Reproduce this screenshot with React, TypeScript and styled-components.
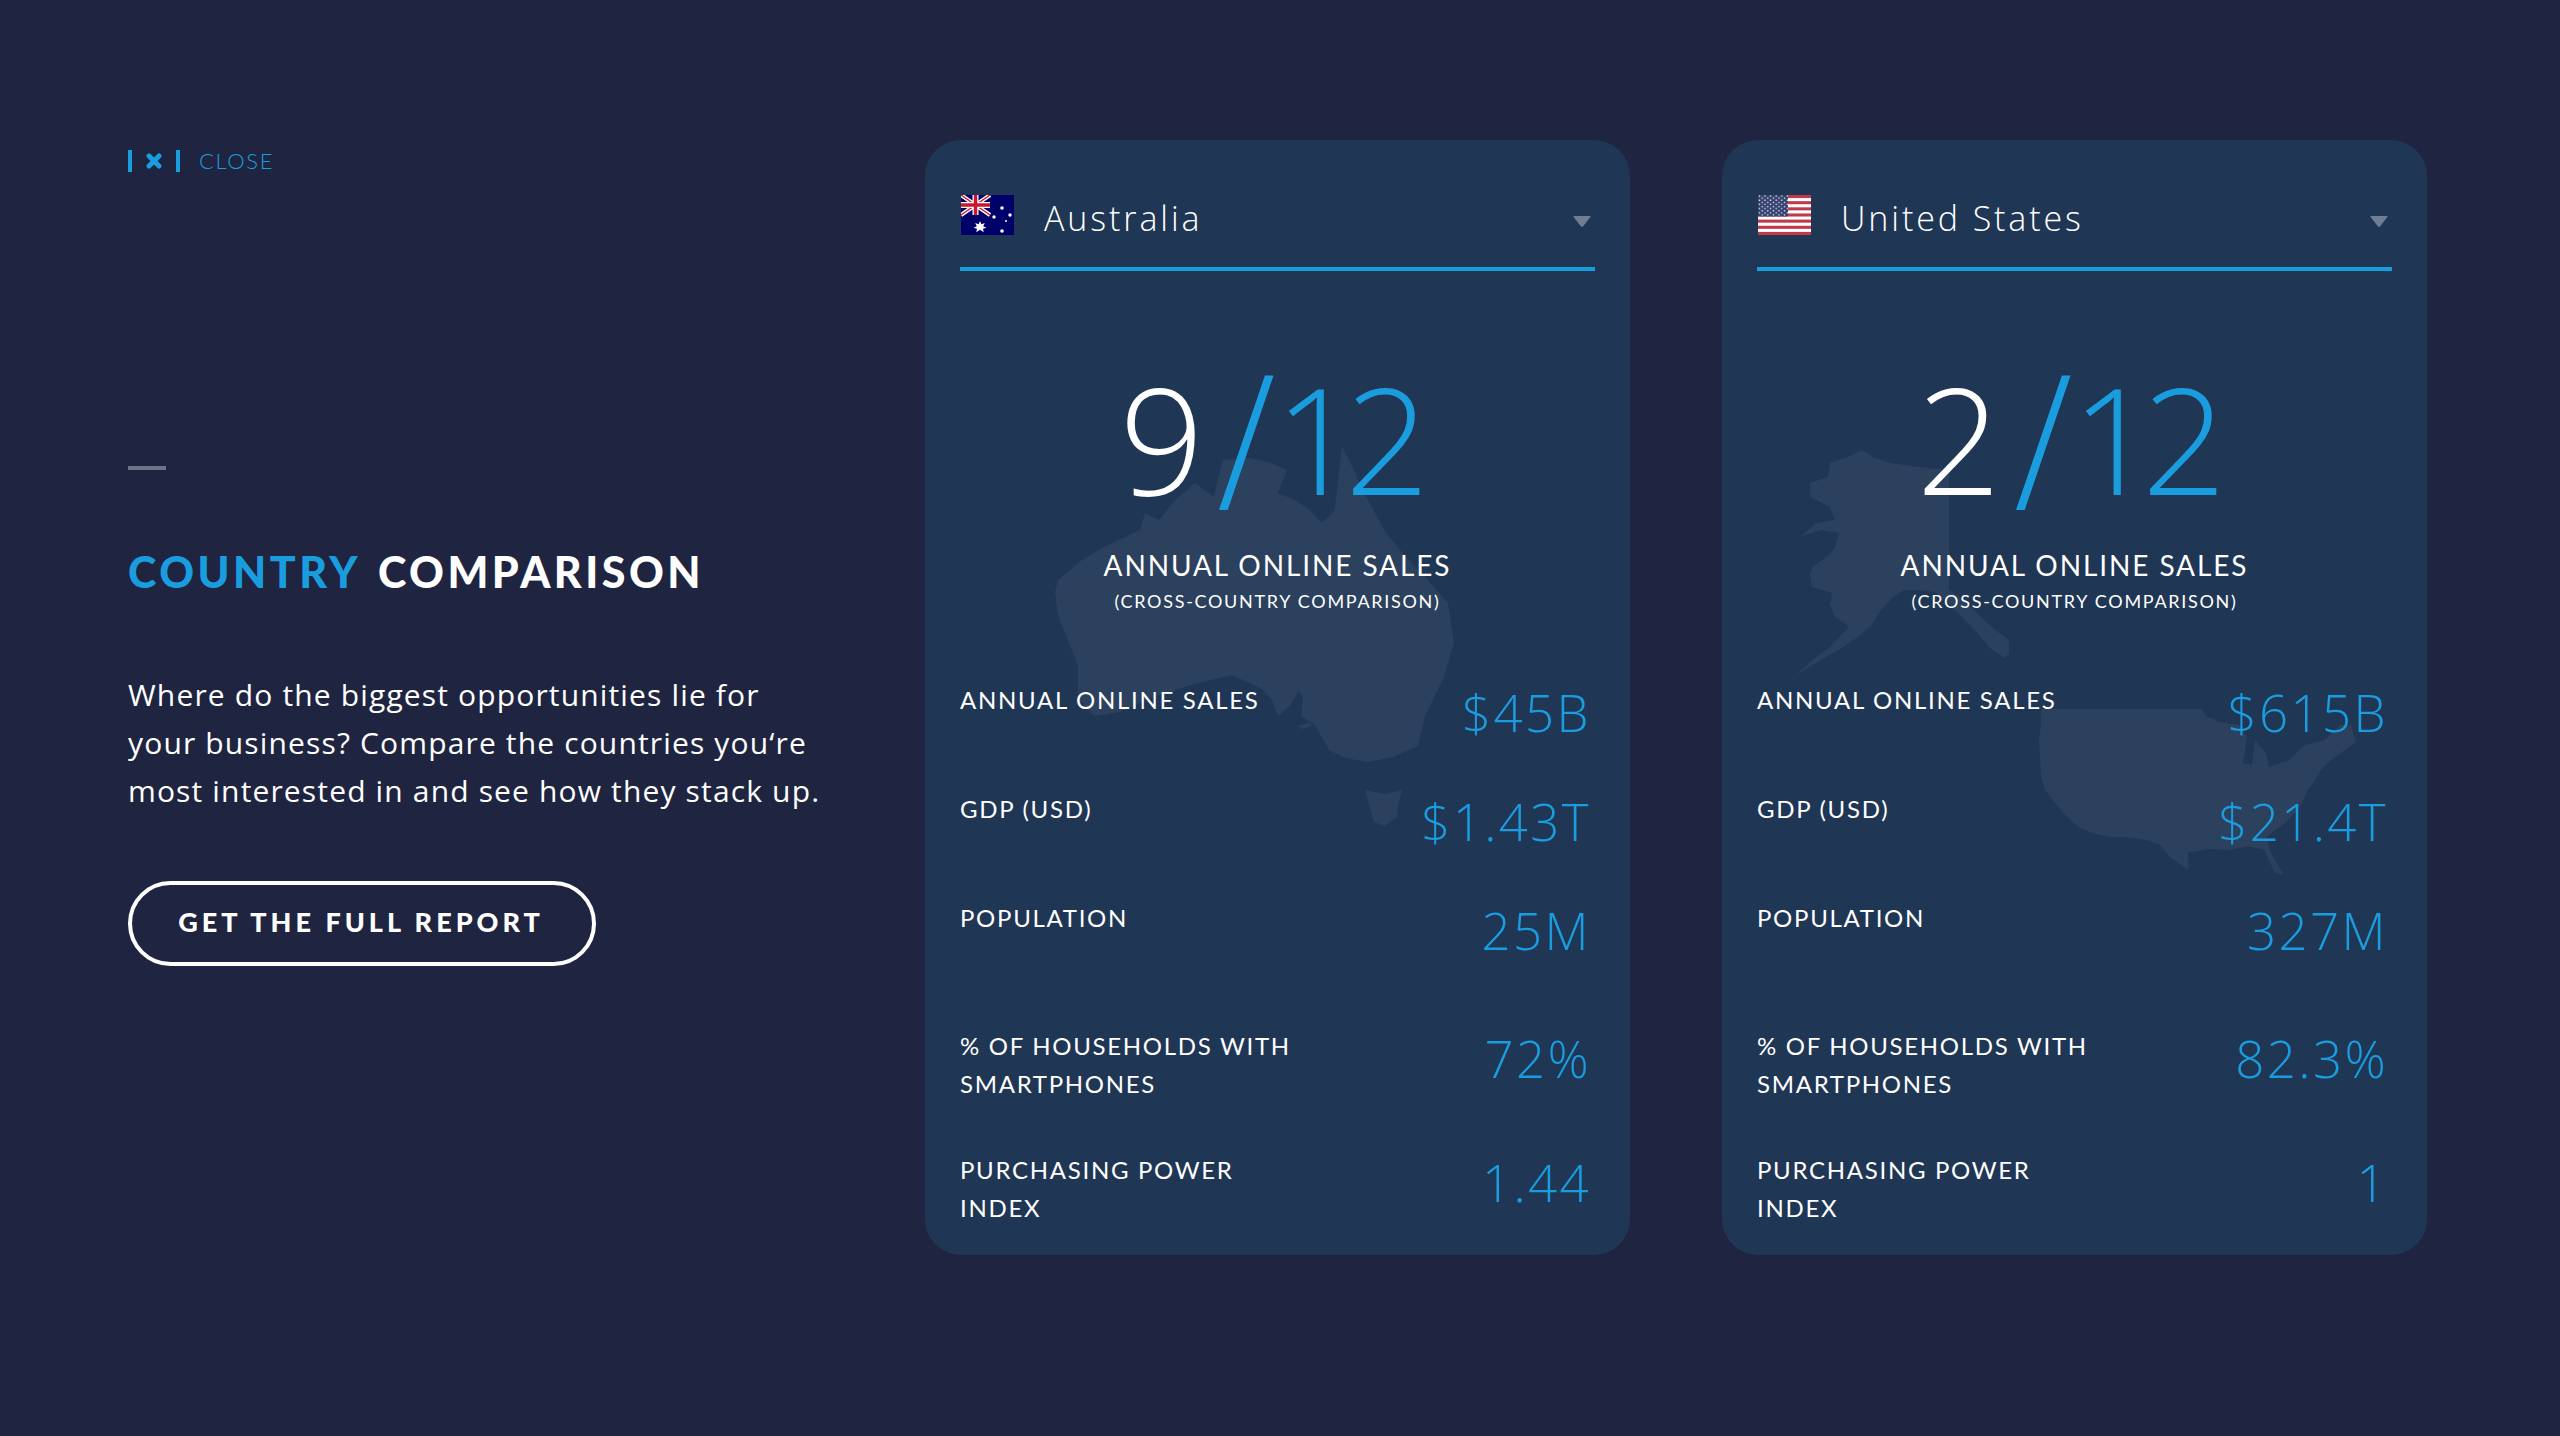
import React from 'react';
import styled, { createGlobalStyle } from 'styled-components';

const BLUE = '#1a9ddf';
const MAP = '#2c415d';
const LIGHT_FONT = "'Open Sans', 'Liberation Sans', sans-serif";

const GlobalStyle = createGlobalStyle`
  html, body {
    margin: 0;
    padding: 0;
    background: #1f2540;
  }
  * { box-sizing: border-box; }
`;

const Page = styled.main`
  width: 2560px;
  height: 1436px;
  padding: 140px 0 0 128px;
  display: grid;
  grid-template-columns: 797px 705px 705px;
  background: #1f2540;
  font-family: 'Lato', 'Liberation Sans', sans-serif;
  color: #fff;
`;

const Intro = styled.section`
  display: flex;
  flex-direction: column;
  align-items: flex-start;
`;

const CloseLink = styled.div`
  display: flex;
  align-items: center;
  height: 22px;
  margin-top: 10px;
  color: ${BLUE};
`;

const CloseBox = styled.span`
  width: 52px;
  height: 22px;
  border-left: 4px solid ${BLUE};
  border-right: 4px solid ${BLUE};
  display: flex;
  align-items: center;
  justify-content: center;
  margin-right: 19px;
`;

const CloseText = styled.span`
  margin-top: -2px;
  font-size: 22px;
  font-weight: 300;
  letter-spacing: 1.6px;
`;

const Dash = styled.div`
  width: 38px;
  height: 4px;
  margin-top: 294px;
  background: #6f7388;
`;

const Heading = styled.h1`
  margin: 76px 0 0;
  font-size: 43px;
  line-height: 52px;
  font-weight: 900;
  letter-spacing: 3.5px;
  word-spacing: 5px;
  white-space: nowrap;
`;

const Accent = styled.span`
  color: ${BLUE};
`;

const Blurb = styled.p`
  margin: 73px 0 0;
  font-family: ${LIGHT_FONT};
  font-size: 30px;
  line-height: 48px;
  font-weight: 400;
  letter-spacing: 1.15px;
  white-space: nowrap;
`;

const ReportButton = styled.button`
  margin-top: 66px;
  width: 468px;
  height: 85px;
  padding: 0 2px 4px 0;
  border: 4px solid #fff;
  border-radius: 43px;
  background: transparent;
  color: #fff;
  font-family: inherit;
  font-size: 27px;
  font-weight: 900;
  letter-spacing: 4px;
  white-space: nowrap;
`;

const Card = styled.article<{ $offset?: number }>`
  position: relative;
  width: 705px;
  height: 1115px;
  padding: 55px 35px 0;
  margin-left: ${({ $offset }) => $offset ?? 0}px;
  border-radius: 36px;
  background: #203655;
  overflow: hidden;
`;

const MapArt = styled.svg`
  position: absolute;
  left: 0;
  top: 0;
  width: 705px;
  height: 1115px;
`;

const CardHeader = styled.header`
  position: relative;
  height: 76px;
  border-bottom: 4px solid ${BLUE};
  display: flex;
  align-items: flex-start;
`;

const FlagArt = styled.svg`
  width: 53px;
  height: 40px;
  margin-left: 1px;
  flex: none;
`;

const CountryName = styled.span`
  margin-left: 30px;
  margin-top: 3px;
  font-family: ${LIGHT_FONT};
  font-size: 34px;
  line-height: 40px;
  font-weight: 300;
  letter-spacing: 2.9px;
`;

const Caret = styled.svg`
  width: 18px;
  height: 11px;
  margin: 21px 4px 0 auto;
`;

const Hero = styled.div`
  position: relative;
  margin-top: 84px;
  text-align: center;
`;

const Score = styled.div`
  height: 172px;
  margin-top: -13px;
  padding-right: 20px;
  display: flex;
  justify-content: center;
  align-items: baseline;
  font-family: ${LIGHT_FONT};
  font-size: 148px;
  line-height: 172px;
  font-weight: 350;
  white-space: nowrap;
`;

const ScoreSlash = styled.span`
  margin: 0 -1px 0 13px;
  color: ${BLUE};
  font-size: 172px;
  line-height: 172px;
  transform: translateY(8px) scaleY(1.1);
`;

const ScoreTotal = styled.span`
  color: ${BLUE};
  letter-spacing: -14px;
`;

const HeroTitle = styled.div`
  margin-top: 33px;
  font-size: 28px;
  line-height: 36px;
  font-weight: 400;
  letter-spacing: 1.9px;
`;

const HeroNote = styled.div`
  margin-top: 6px;
  font-size: 18px;
  line-height: 24px;
  letter-spacing: 1.7px;
`;

const Stats = styled.div`
  position: relative;
  margin-top: 68px;
`;

const StatRow = styled.div<{ $height: number }>`
  height: ${({ $height }) => $height}px;
  display: flex;
  justify-content: space-between;
  align-items: flex-start;
  padding-right: 4px;
`;

const StatLabel = styled.div`
  max-width: 345px;
  font-size: 24px;
  line-height: 38px;
  letter-spacing: 1.7px;
`;

const StatValue = styled.div`
  margin-top: 2px;
  font-family: ${LIGHT_FONT};
  font-size: 51px;
  line-height: 58px;
  font-weight: 350;
  letter-spacing: 2.4px;
  color: ${BLUE};
  white-space: nowrap;
`;

const AustraliaMap = () => (
  <MapArt viewBox="925 140 705 1115" fill={MAP}>
    <path d="M1342 447 L1354 470 L1362 490 L1372 507 L1384 530 L1405 556 L1425 577 L1448 603 L1454 643 L1443 679 L1425 716 L1418 746 L1393 757 L1368 762 L1345 758 L1329 750 L1315 725 L1301 716 L1303 698 L1299 691 L1290 706 L1278 716 L1272 700 L1262 689 L1232 675 L1195 684 L1150 698 L1120 712 L1094 716 L1078 698 L1078 666 L1058 615 L1055 592 L1058 580 L1082 560 L1104 547 L1140 530 L1145 513 L1159 520 L1175 500 L1195 483 L1214 497 L1218 478 L1223 460 L1250 458 L1268 462 L1287 470 L1278 493 L1295 500 L1310 510 L1322 523 L1331 515 L1335 507 L1338 480 Z" />
    <path d="M1365 790 L1385 794 L1402 790 L1398 806 L1397 817 L1384 826 L1374 822 Z" />
    <path d="M1350 745 l8 -4 l4 4 l-6 5 Z M1298 726 l12 -4 l2 4 l-10 3 Z" />
  </MapArt>
);

const UnitedStatesMap = () => (
  <MapArt viewBox="1722 140 705 1115" fill={MAP}>
    <path d="M1862 450 L1875 458 L1890 463 L1920 467 L1949 470 L1949 590 L1963 600 L1977 613 L1995 630 L2009 640 L2009 654 L2005 658 L1990 648 L1977 633 L1962 617 L1949 604 L1935 592 L1918 590 L1904 590 L1892 598 L1881 610 L1870 627 L1858 637 L1842 648 L1826 657 L1796 675 L1815 658 L1830 647 L1849 627 L1843 622 L1835 617 L1830 604 L1832 593 L1812 587 L1810 575 L1812 567 L1828 556 L1835 547 L1839 533 L1821 530 L1800 537 L1816 523 L1835 520 L1830 507 L1810 497 L1810 483 L1828 477 L1830 463 L1845 458 Z" />
    <path d="M2041 709 L2202 709 L2206 716 L2220 722 L2239 725 L2247 737 L2243 763 L2252 765 L2255 740 L2266 753 L2269 767 L2289 760 L2305 745 L2325 740 L2340 725 L2351 725 L2356 742 L2338 755 L2331 760 L2321 770 L2314 782 L2308 790 L2298 810 L2284 824 L2266 837 L2271 853 L2284 875 L2275 873 L2264 850 L2248 846 L2230 850 L2208 849 L2188 853 L2188 870 L2170 857 L2160 845 L2147 840 L2124 837 L2110 837 L2095 834 L2078 827 L2065 815 L2055 803 L2045 790 L2041 777 L2040 755 L2039 740 L2041 725 Z" />
  </MapArt>
);

const AustraliaFlag = () => (
  <FlagArt viewBox="0 0 53 40">
    <rect width="53" height="40" fill="#00006a" />
    <path d="M0 0 L29 20 M29 0 L0 20" stroke="#fff" strokeWidth="4" />
    <path d="M0 0 L29 20 M29 0 L0 20" stroke="#cf142b" strokeWidth="1.4" />
    <path d="M14.5 0 V20 M0 10 H29" stroke="#fff" strokeWidth="6" />
    <path d="M14.5 0 V20 M0 10 H29" stroke="#cf142b" strokeWidth="3.4" />
    <g fill="#fff">
      <path d="M19 26 l1.4 3.2 3.4 -1.2 -1.6 3.2 3.2 1.6 -3.4 .9 .7 3.5 -3.7 -2.4 -3.7 2.4 .7 -3.5 -3.4 -.9 3.2 -1.6 -1.6 -3.2 3.4 1.2 Z" />
      <circle cx="41" cy="13" r="1.8" />
      <circle cx="33" cy="22" r="1.7" />
      <circle cx="49" cy="20" r="1.7" />
      <circle cx="45" cy="26" r="1" />
      <circle cx="41" cy="36" r="1.8" />
    </g>
  </FlagArt>
);

const UnitedStatesFlag = () => (
  <FlagArt viewBox="0 0 53 40">
    <defs>
      <pattern id="usStars" width="5.6" height="4.2" patternUnits="userSpaceOnUse">
        <circle cx="1.4" cy="1.05" r=".8" fill="#d8dbe8" />
        <circle cx="4.2" cy="3.15" r=".8" fill="#d8dbe8" />
      </pattern>
    </defs>
    <rect width="53" height="40" fill="#fff" />
    {[0, 1, 2, 3, 4, 5, 6].map((n) => (
      <rect key={n} y={n * 6.15} width="53" height="3.08" fill="#c0394a" />
    ))}
    <rect width="30" height="21.5" fill="#33406e" />
    <rect width="30" height="21.5" fill="url(#usStars)" />
  </FlagArt>
);

const DownCaret = () => (
  <Caret viewBox="0 0 18 11">
    <path d="M1 0 H17 Q18 0 17.4 1 L10 10.4 Q9 11.2 8 10.4 L.6 1 Q0 0 1 0 Z" fill="#6f7e95" />
  </Caret>
);

const CloseIcon = () => (
  <svg width="16" height="16" viewBox="0 0 16 16">
    <path d="M3 3 L13 13 M13 3 L3 13" stroke={BLUE} strokeWidth="5" strokeLinecap="round" />
  </svg>
);

type Country = {
  name: string;
  rank: string;
  map: React.ReactElement;
  flag: React.ReactElement;
  values: string[];
  offset?: number;
};

const rows: { label: string; height: number }[] = [
  { label: 'ANNUAL ONLINE SALES', height: 109 },
  { label: 'GDP (USD)', height: 109 },
  { label: 'POPULATION', height: 128 },
  { label: '% OF HOUSEHOLDS WITH SMARTPHONES', height: 124 },
  { label: 'PURCHASING POWER INDEX', height: 90 },
];

const countries: Country[] = [
  {
    name: 'Australia',
    rank: '9',
    map: <AustraliaMap />,
    flag: <AustraliaFlag />,
    values: ['$45B', '$1.43T', '25M', '72%', '1.44'],
  },
  {
    name: 'United States',
    rank: '2',
    map: <UnitedStatesMap />,
    flag: <UnitedStatesFlag />,
    values: ['$615B', '$21.4T', '327M', '82.3%', '1'],
    offset: 92,
  },
];

const App = (): React.ReactElement => (
  <>
    <GlobalStyle />
    <Page>
      <Intro>
        <CloseLink>
          <CloseBox>
            <CloseIcon />
          </CloseBox>
          <CloseText>CLOSE</CloseText>
        </CloseLink>
        <Dash />
        <Heading>
          <Accent>COUNTRY</Accent> COMPARISON
        </Heading>
        <Blurb>
          Where do the biggest opportunities lie for
          <br />
          your business? Compare the countries you‘re
          <br />
          most interested in and see how they stack up.
        </Blurb>
        <ReportButton>GET THE FULL REPORT</ReportButton>
      </Intro>
      {countries.map((country) => (
        <Card key={country.name} $offset={country.offset}>
          {country.map}
          <CardHeader>
            {country.flag}
            <CountryName>{country.name}</CountryName>
            <DownCaret />
          </CardHeader>
          <Hero>
            <Score>
              {country.rank}
              <ScoreSlash>/</ScoreSlash>
              <ScoreTotal>12</ScoreTotal>
            </Score>
            <HeroTitle>ANNUAL ONLINE SALES</HeroTitle>
            <HeroNote>(CROSS-COUNTRY COMPARISON)</HeroNote>
          </Hero>
          <Stats>
            {rows.map((row, i) => (
              <StatRow key={row.label} $height={row.height}>
                <StatLabel>{row.label}</StatLabel>
                <StatValue>{country.values[i]}</StatValue>
              </StatRow>
            ))}
          </Stats>
        </Card>
      ))}
    </Page>
  </>
);

export default App;
